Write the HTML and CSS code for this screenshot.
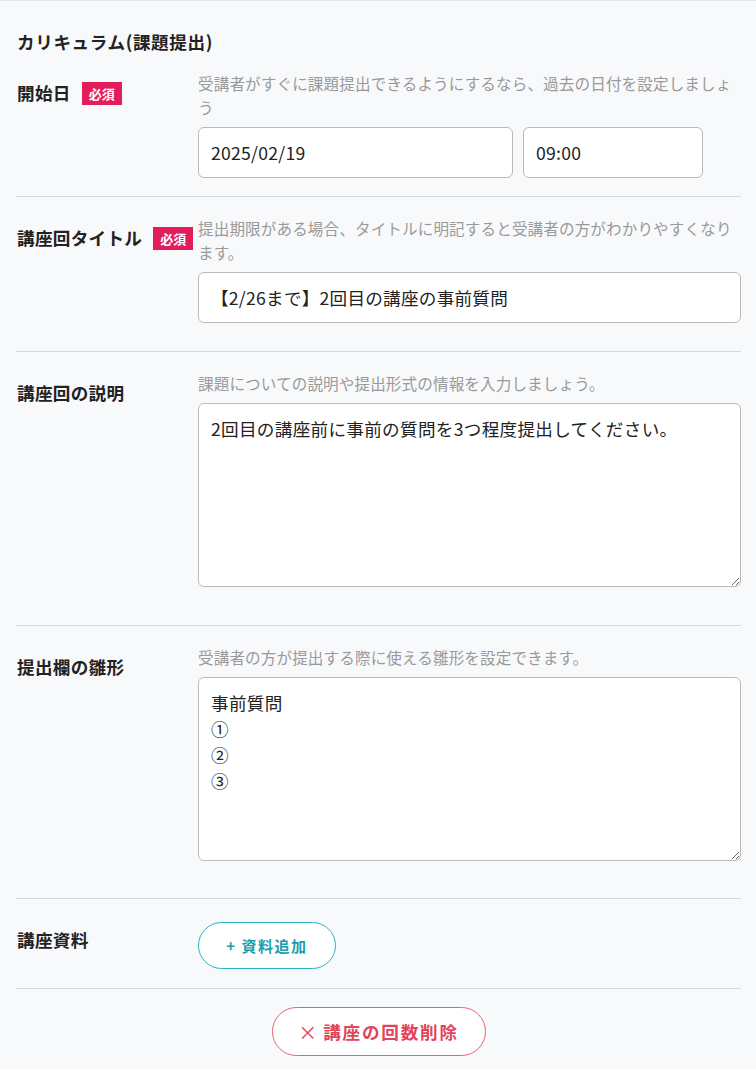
FILE: index.html
```html
<!DOCTYPE html>
<html lang="ja">
<head>
<meta charset="utf-8">
<link rel="stylesheet" href="styles.css">
</head>
<body>
<div class="page">
  <h2 class="title">カリキュラム(課題提出)</h2>

  <div class="row row-first">
    <div class="label"><span>開始日</span><span class="badge">必須</span></div>
    <div class="field">
      <p class="hint">受講者がすぐに課題提出できるようにするなら、過去の日付を設定しましょう</p>
      <div class="datetime">
        <input class="input input-date" type="text" value="2025/02/19">
        <input class="input input-time" type="text" value="09:00">
      </div>
    </div>
  </div>

  <div class="row row-title">
    <div class="label"><span>講座回タイトル</span><span class="badge">必須</span></div>
    <div class="field">
      <p class="hint">提出期限がある場合、タイトルに明記すると受講者の方がわかりやすくなります。</p>
      <input class="input" type="text" value="【2/26まで】2回目の講座の事前質問">
    </div>
  </div>

  <div class="row row-area">
    <div class="label"><span>講座回の説明</span></div>
    <div class="field">
      <p class="hint">課題についての説明や提出形式の情報を入力しましょう。</p>
      <textarea class="textarea">2回目の講座前に事前の質問を3つ程度提出してください。</textarea>
    </div>
  </div>

  <div class="row row-area row-area2">
    <div class="label"><span>提出欄の雛形</span></div>
    <div class="field">
      <p class="hint">受講者の方が提出する際に使える雛形を設定できます。</p>
      <textarea class="textarea">事前質問
①
②
③</textarea>
    </div>
  </div>

  <div class="row row-files">
    <div class="label label-files"><span>講座資料</span></div>
    <div class="field">
      <button class="btn-add" type="button">+ 資料追加</button>
    </div>
  </div>

  <div class="footer">
    <button class="btn-delete" type="button"><span class="x">×</span>講座の回数削除</button>
  </div>
</div>
</body>
</html>
```

FILE: styles.css
```css
* { box-sizing: border-box; }

html, body {
  margin: 0;
  padding: 0;
  background: #f8f9fb;
}

body {
  font-family: "Noto Sans CJK JP", "Noto Sans", sans-serif;
  color: #222;
  border-top: 1px solid #e3e5e8;
}

.page {
  padding: 0 15px 0 16px;
}

.title {
  margin: 0;
  padding-top: 29px;
  padding-left: 1px;
  font-size: 17.6px;
  line-height: 24px;
  font-weight: 700;
  letter-spacing: 0.6px;
}

.row {
  display: grid;
  grid-template-columns: 182px 1fr;
  border-bottom: 1px solid #d7d8da;
  padding-top: 19px;
}

.row-first { padding-top: 17px; padding-bottom: 18px; }
.row-title { padding-bottom: 28px; }
.row-area { padding-bottom: 38px; }
.row-area2 { padding-bottom: 37px; }
.row-files { padding-top: 23px; padding-bottom: 19px; }

.label {
  display: flex;
  align-items: center;
  align-self: start;
  padding-top: 10px;
  padding-left: 1px;
  font-size: 17.6px;
  line-height: 24px;
  font-weight: 700;
  letter-spacing: 0.3px;
}

.label-files { padding-top: 6px; }

.badge {
  display: inline-block;
  margin-left: 11px;
  padding: 0 7px;
  height: 23px;
  line-height: 23px;
  background: #e11d5a;
  color: #fff;
  font-size: 13px;
  font-weight: 700;
  letter-spacing: 0;
}

.field {
  display: flex;
  flex-direction: column;
  align-items: stretch;
}

.hint {
  margin: 0 0 8px;
  font-size: 15.6px;
  line-height: 24px;
  color: #9a9a9a;
  letter-spacing: 0.1px;
}

.datetime {
  display: flex;
  gap: 10px;
}

.input {
  display: block;
  width: 100%;
  height: 51px;
  border: 1px solid #b9b9b9;
  border-radius: 6px;
  background: #fff;
  padding: 0 12px;
  font-family: "Noto Sans CJK JP", "Noto Sans", sans-serif;
  font-size: 17.6px;
  color: #222;
  letter-spacing: 0.25px;
  outline: none;
}

.input-date { width: 315px; }
.input-time { width: 180px; }

.textarea {
  display: block;
  width: 100%;
  height: 184px;
  border: 1px solid #b9b9b9;
  border-radius: 6px;
  background: #fff;
  padding: 12px 12px;
  font-family: "Noto Sans CJK JP", "Noto Sans", sans-serif;
  font-size: 17.6px;
  line-height: 26px;
  color: #222;
  letter-spacing: 0.3px;
  outline: none;
}

.btn-add {
  align-self: flex-start;
  width: 138px;
  height: 47px;
  border: 1px solid #2cb3c3;
  border-radius: 24px;
  background: #fff;
  color: #1d9cac;
  font-family: "Noto Sans CJK JP", "Noto Sans", sans-serif;
  font-size: 15px;
  font-weight: 700;
  letter-spacing: 0.1em;
  cursor: pointer;
}

.footer {
  display: flex;
  justify-content: center;
  padding-top: 18px;
}

.btn-delete {
  display: flex;
  align-items: center;
  justify-content: center;
  width: 214px;
  height: 49px;
  border: 1px solid #e8636f;
  border-radius: 25px;
  background: #fff;
  color: #e2435a;
  font-family: "Noto Sans CJK JP", "Noto Sans", sans-serif;
  font-size: 17.6px;
  font-weight: 700;
  letter-spacing: 0.1em;
  cursor: pointer;
}

.x {
  font-weight: 400;
  font-size: 19px;
  margin-right: 6px;
  letter-spacing: 0;
}
```
